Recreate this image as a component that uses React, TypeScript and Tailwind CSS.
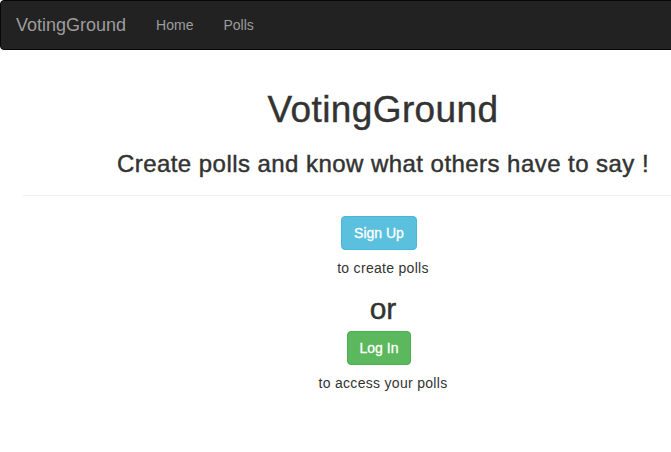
import React from 'react';

const App: React.FC = () => {
  return (
    <div className="w-[766px] min-h-[452px] bg-white font-['Liberation_Sans',Arial,sans-serif] text-[14px] text-[#333]">
      {/* Navbar */}
      <nav className="flex h-[50px] items-center rounded-[4px] border border-[#080808] bg-[#222]">
        <span className="px-[15px] text-[18px] text-[#9d9d9d]">VotingGround</span>
        <div className="flex">
          <a className="px-[15px] text-[14px] text-[#9d9d9d]">Home</a>
          <a className="px-[15px] text-[14px] text-[#9d9d9d]">Polls</a>
        </div>
      </nav>

      {/* Main */}
      <div className="ml-[23px] w-[720px]">
        <div className="flex flex-col items-center">
          <h1 className="mt-[40px] text-[37px] leading-[1.1] tracking-[0.4px] [-webkit-text-stroke:0.4px_#333]">
            VotingGround
          </h1>
          <h3 className="mt-[20px] text-[24px] leading-[1.1] tracking-[0.45px] [-webkit-text-stroke:0.45px_#333]">
            Create polls and know what others have to say !
          </h3>
        </div>
        <hr className="mt-[18px] border-t border-[#eee]" />

        <div className="mt-[20px] flex flex-col items-center">
          <button className="mr-[8px] h-[34px] rounded-[4px] border border-[#46b8da] bg-[#5bc0de] px-[12px] text-[14px] text-white [-webkit-text-stroke:0.3px_#fff]">
            Sign Up
          </button>
          <p className="mt-[8px] leading-[20px] tracking-[0.3px]">to create polls</p>
          <h2 className="mt-[14px] text-[30px] leading-[1.1] [-webkit-text-stroke:0.4px_#333]">or</h2>
          <button className="mr-[8px] mt-[6px] h-[34px] rounded-[4px] border border-[#4cae4c] bg-[#5cb85c] px-[12px] text-[14px] text-white [-webkit-text-stroke:0.3px_#fff]">
            Log In
          </button>
          <p className="mt-[8px] leading-[20px] tracking-[0.3px]">to access your polls</p>
        </div>
      </div>
    </div>
  );
};

export default App;
